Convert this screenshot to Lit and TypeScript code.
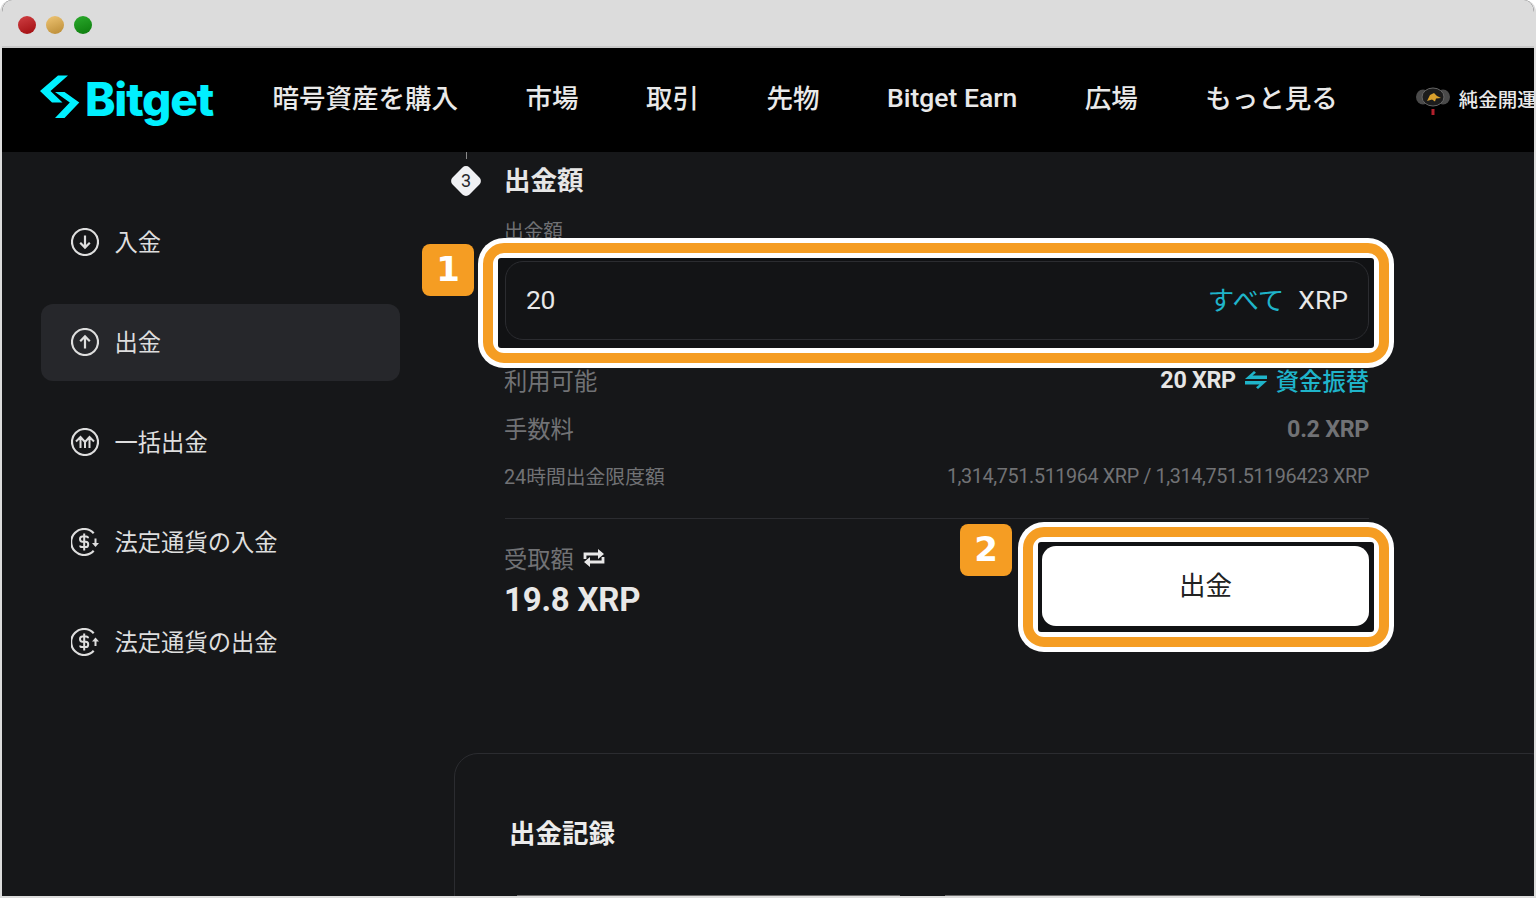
import { LitElement, html, css, svg } from 'lit';
import { customElement } from 'lit/decorators.js';

const dollar = svg`<path d="M22.7 5.2A13 13 0 1 0 22.7 22.8" fill="none" stroke="currentColor" stroke-width="2.200"/>
  <path d="M17 10.200c0-1-.8-1.700-1.800-1.700h-3.800c-1.400 0-2.400 1-2.400 2.600s1 2.700 2.400 2.700h3.400c1.400 0 2.400 1 2.400 2.600s-1 2.700-2.400 2.700h-3.800c-1 0-1.800-.7-1.800-1.700M13.200 5.500v17" fill="none" stroke="currentColor" stroke-width="2"/>`;

const sideItems = [
  { label: '入金', icon: svg`<circle cx="14" cy="14" r="13" fill="none" stroke="currentColor" stroke-width="2.200"/><path d="M14 7.500v12M9.200 14.800l4.800 4.800 4.800-4.800" fill="none" stroke="currentColor" stroke-width="2.200"/>` },
  { label: '出金', active: true, icon: svg`<circle cx="14" cy="14" r="13" fill="none" stroke="currentColor" stroke-width="2.200"/><path d="M14 20.500v-12M9.200 13.200l4.800-4.800 4.800 4.800" fill="none" stroke="currentColor" stroke-width="2.200"/>` },
  { label: '一括出金', icon: svg`<circle cx="14" cy="14" r="13" fill="none" stroke="currentColor" stroke-width="2.200"/><path d="M9.500 20v-11M5 13.500l4.500-4.500 4.500 5 4.500-5 4.500 4.500M18.500 20v-11M14 14v6" fill="none" stroke="currentColor" stroke-width="2"/>` },
  { label: '法定通貨の入金', icon: svg`${dollar}<path d="M24.500 10.500v5" stroke="currentColor" stroke-width="2"/><path d="M21 15h7l-3.500 4z" fill="currentColor"/>` },
  { label: '法定通貨の出金', icon: svg`${dollar}<path d="M24.500 18v-5" stroke="currentColor" stroke-width="2"/><path d="M21 13.500h7L24.500 9.500z" fill="currentColor"/>` },
];

const navItems = ['暗号資産を購入', '市場', '取引', '先物', 'Bitget Earn', '広場', 'もっと見る'];

@customElement('app-root')
export class AppRoot extends LitElement {
  static styles = css`
    :host {
      display: block;
      position: relative;
      width: 1536px;
      height: 898px;
      overflow: hidden;
      background: #fff;
      font-family: Roboto, 'Noto Sans CJK JP', sans-serif;
    }
    .frame {
      height: 898px;
      box-sizing: border-box;
      border: 2px solid #dcdcdc;
      border-top: 0;
      border-radius: 12px 12px 0 0;
      overflow: hidden;
      display: flex;
      flex-direction: column;
      background: #161719;
    }
    .titlebar {
      flex: none;
      height: 46px;
      margin: 0 -2px;
      background: #dcdcdc;
      border-bottom: 2px solid #c9c9c9;
      display: flex;
      align-items: center;
      gap: 10px;
      padding-left: 18px;
    }
    .dot { width: 18px; height: 18px; border-radius: 50%; margin-top: 4px; }
    .dot.red { background: linear-gradient(160deg, #d04044, #a00c0f); }
    .dot.yellow { background: linear-gradient(160deg, #efc574, #b98a34); }
    .dot.green { background: linear-gradient(160deg, #2bab2d, #0c7a0c); }

    nav {
      flex: none;
      height: 104px;
      background: #000;
      display: flex;
      align-items: center;
      padding-left: 38px;
      white-space: nowrap;
      color: #e9e9e9;
    }
    .logo { display: flex; align-items: center; width: 232.500px; flex: none; color: #00f0ff; }
    .logo svg { width: 40px; height: 44px; flex: none; margin-top: -6px; }
    .logo span {
      font-family: Inter, sans-serif;
      font-weight: 800;
      font-size: 46px;
      letter-spacing: -1.200px;
      margin: -2px 0 0 5px;
      line-height: 44px;
    }
    .links { display: flex; align-items: center; gap: 67.500px; font-size: 26.500px; font-weight: 500; margin-top: -2px; }
    .links span { line-height: 30px; display: block; margin-top: -2px; }
    .links span.cjk { margin-top: -1px; }
    .promo { display: flex; align-items: center; margin-left: 77px; font-size: 19.500px; font-weight: 500; margin-top: -4px; }
    .promo svg { width: 36px; height: 36px; margin-right: 8px; flex: none; margin-top: 6px; }

    .body { flex: 1; display: flex; min-height: 0; }
    aside {
      flex: none;
      width: 359px;
      margin-left: 39px;
      padding-top: 52px;
      display: flex;
      flex-direction: column;
      gap: 23px;
      color: #dedede;
    }
    .side-item {
      height: 77px;
      box-sizing: border-box;
      padding: 0 0 1px 30px;
      border-radius: 12px;
      display: flex;
      align-items: center;
      gap: 15.500px;
      font-size: 23.300px;
    }
    .side-item span { margin-top: -3px; }
    .side-item.active { background: #26272b; }
    .side-item svg { width: 28px; height: 28px; flex: none; }

    main {
      flex: none;
      width: 1100px;
      margin-left: 54px;
      display: flex;
      flex-direction: column;
    }
    main > * { flex: none; }
    .step { position: relative; display: flex; align-items: center; height: 58px; }
    .step::before {
      content: '';
      position: absolute;
      left: 12px;
      top: 0;
      width: 1px;
      height: 7px;
      background: #8a8a8a;
    }
    .diamond {
      width: 24px;
      height: 24px;
      border-radius: 5px;
      background: #f0f1f4;
      transform: rotate(45deg);
      display: flex;
      align-items: center;
      justify-content: center;
    }
    .diamond span { transform: rotate(-45deg); font-size: 18px; color: #26272b; line-height: 1; }
    .step h2 { margin: 0 0 0 26px; font-size: 26.500px; font-weight: 700; color: #e6e6e6; line-height: 30px; }

    .form { width: 864px; margin-left: 51px; display: flex; flex-direction: column; }
    .form > * { flex: none; }
    .label { font-size: 19.700px; color: #6f7073; line-height: 30px; height: 44px; margin: 7px 0 0 -1px; }
    .input {
      position: relative;
      z-index: 3;
      box-sizing: border-box;
      height: 79px;
      border: 1.500px solid #2b2c30;
      border-radius: 18px;
      background: #131416;
      display: flex;
      align-items: center;
      padding: 0 20px 2px;
      font-size: 26.500px;
      color: #e8e8e8;
    }
    .input .value { flex: 1; letter-spacing: -0.500px; }
    .input .all { color: #1fb4ca; margin: -2px 14px 0 0; }
    .rows { margin-top: 16px; }
    .row {
      display: flex;
      justify-content: space-between;
      align-items: center;
      height: 48px;
      font-size: 23.300px;
      color: #717275;
    }
    .row > span:first-child { margin-left: -1px; }
    .row b { font-weight: 700; letter-spacing: -0.300px; margin-top: 2px; }
    .row .avail { display: flex; align-items: center; color: #e6e6e6; font-weight: 700; letter-spacing: -0.300px; }
    .row .avail svg { width: 22px; height: 18px; margin: 0 9px; }
    .row .avail em { font-style: normal; color: #1fb4ca; font-weight: 500; letter-spacing: 0; margin-top: -1px; }
    .row.small { font-size: 19.800px; height: 46px; }
    .row.small .limit { letter-spacing: -0.380px; margin-top: 2px; }
    hr { width: 100%; border: 0; border-top: 1.500px solid #2b2c30; margin: 20px 0 0; }
    .receive { display: flex; justify-content: space-between; margin-top: 24px; }
    .receive .lbl { display: flex; align-items: center; gap: 9px; font-size: 23.300px; color: #717275; height: 28px; margin: 1px 0 0 -1px; }
    .receive .lbl svg { width: 22px; height: 18px; }
    .receive .amt { font-size: 33px; font-weight: 700; color: #e8e8e8; line-height: 40px; margin: 8px 0 0 -1px; letter-spacing: -0.200px; }
    .btn {
      position: relative;
      z-index: 3;
      box-sizing: border-box;
      width: 327px;
      height: 80px;
      margin-top: 3px;
      padding-bottom: 5px;
      background: #fff;
      border-radius: 14px;
      display: flex;
      align-items: center;
      justify-content: center;
      font-size: 26.500px;
      color: #222;
    }
    .card {
      box-sizing: border-box;
      margin-top: 127px;
      height: 300px;
      border: 1.500px solid #2b2c30;
      border-radius: 24px;
      padding: 62px 0 0 54px;
    }
    .card h3 { margin: 0; font-size: 26.500px; line-height: 36px; font-weight: 700; color: #ececec; }
    .card .heads { display: flex; gap: 45px; margin: 43px 0 0 8px; }
    .card .heads i { height: 2px; width: 383px; background: #6a6a6a; }
    .card .heads i + i { width: 475px; }

    /* annotation overlays */
    .hl {
      position: absolute;
      z-index: 2;
      box-sizing: border-box;
      border-radius: 26px;
      background: #fff;
    }
    .hl::before {
      content: '';
      position: absolute;
      inset: 5px;
      border: 10px solid #f59d23;
      border-radius: 21px;
      background: #fff;
    }
    .hl::after {
      content: '';
      position: absolute;
      inset: 20px;
      border-radius: 3px;
      background: #111214;
    }
    .hl.one { left: 478px; top: 238px; width: 916px; height: 130px; }
    .hl.two { left: 1018px; top: 522px; width: 376px; height: 130px; }
    .badge {
      position: absolute;
      z-index: 4;
      width: 52px;
      height: 52px;
      border-radius: 8px;
      background: #f59d23;
      color: #fff;
      font-family: 'DejaVu Sans', sans-serif;
      font-weight: 700;
      font-size: 34px;
      line-height: 50px;
      text-align: center;
    }
    .badge.one { left: 422px; top: 244px; }
    .badge.two { left: 960px; top: 524px; }
  `;

  render() {
    return html`
      <div class="frame">
        <div class="titlebar">
          <div class="dot red"></div>
          <div class="dot yellow"></div>
          <div class="dot green"></div>
        </div>
        <nav>
          <div class="logo">
            <svg viewBox="0 0 40 44">
              <path fill="currentColor" d="M18 .5L0 16l12 11.500h10.500L10.500 16 28 .5zM15 17h9.500l14.800 10.500L24.500 43H15l14.800-15.500z" />
            </svg>
            <span>Bitget</span>
          </div>
          <div class="links">${navItems.map((n) => html`<span class=${n.startsWith('Bitget') ? '' : 'cjk'}>${n}</span>`)}</div>
          <div class="promo">
            <svg viewBox="0 0 36 36">
              <ellipse cx="8" cy="14" rx="7" ry="7.500" fill="#4a4a4a" />
              <ellipse cx="28" cy="14" rx="7" ry="7.500" fill="#4a4a4a" />
              <ellipse cx="18" cy="14" rx="11" ry="9" fill="#1c1c1c" stroke="#666" />
              <path d="M12 18l3-6 4-2 3 3 4 2-5 .5-1 3-3-2z" fill="#d9a02c" />
              <rect x="16.500" y="26" width="3" height="6" fill="#b3202c" />
            </svg>
            純金開運
          </div>
        </nav>
        <div class="body">
          <aside>
            ${sideItems.map(
              (s) => html`<div class="side-item ${s.active ? 'active' : ''}">
                <svg viewBox="0 0 28 28">${s.icon}</svg><span>${s.label}</span>
              </div>`,
            )}
          </aside>
          <main>
            <div class="step">
              <div class="diamond"><span>3</span></div>
              <h2>出金額</h2>
            </div>
            <div class="form">
              <div class="label">出金額</div>
              <div class="input">
                <span class="value">20</span>
                <span class="all">すべて</span>
                <span>XRP</span>
              </div>
              <div class="rows">
                <div class="row">
                  <span>利用可能</span>
                  <span class="avail">
                    20 XRP
                    <svg viewBox="0 0 22 18">
                      <path fill="#1fb4ca" d="M0 8 9 0l2 1.800-3.500 2.700H22V8zM22 10l-9 8-2-1.800 3.500-2.700H0V10z" />
                    </svg>
                    <em>資金振替</em>
                  </span>
                </div>
                <div class="row"><span>手数料</span><b>0.2 XRP</b></div>
                <div class="row small">
                  <span>24時間出金限度額</span>
                  <span class="limit">1,314,751.511964 XRP / 1,314,751.51196423 XRP</span>
                </div>
              </div>
              <hr />
              <div class="receive">
                <div>
                  <div class="lbl">
                    受取額
                    <svg viewBox="0 0 22 18">
                      <path fill="none" stroke="#e8e8e8" stroke-width="2.800" d="M2 10V5h16M20 8v5H4" />
                      <path fill="#e8e8e8" d="M15 0l6 5-6 5zM7 8l-6 5 6 5z" />
                    </svg>
                  </div>
                  <div class="amt">19.8 XRP</div>
                </div>
                <div class="btn">出金</div>
              </div>
            </div>
            <section class="card">
              <h3>出金記録</h3>
              <div class="heads"><i></i><i></i></div>
            </section>
          </main>
        </div>
      </div>
      <div class="hl one"></div>
      <div class="hl two"></div>
      <div class="badge one">1</div>
      <div class="badge two">2</div>
    `;
  }
}
